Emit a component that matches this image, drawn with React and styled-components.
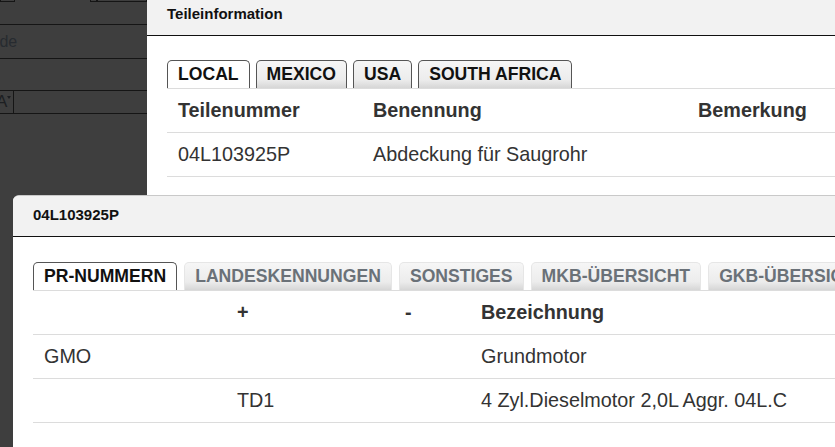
import React from 'react'
import styled, { createGlobalStyle } from 'styled-components';

const GlobalStyle = createGlobalStyle`
  body {
    margin: 0;
    font-family: "Liberation Sans", Arial, sans-serif;
  }
`;

const Screen = styled.div`
  position: relative;
  width: 835px;
  height: 447px;
  overflow: hidden;
  background: #3e3e3e;
`;

/* dimmed page behind the dialogs */
const BackPage = styled.div`
  display: flex;
  flex-direction: column;
  width: 147px;
`;

const BackRow = styled.div`
  display: flex;
  align-items: center;
  height: ${p => p.h}px;
  border-bottom: 1px solid #151515;
  overflow: hidden;
`;

const BackBox = styled.div`
  align-self: flex-start;
  width: ${p => p.w}px;
  margin-left: ${p => p.left || 0}px;
  height: 1px;
  border: 1px solid #151515;
  border-top: none;
`;

const BackText = styled.span`
  margin-left: -29px;
  font-size: 16px;
  color: #272b30;
  white-space: nowrap;
`;

const BackSelect = styled.div`
  position: relative;
  display: flex;
  align-items: center;
  width: 13px;
  height: 100%;
  border-right: 1px solid #151515;
  overflow: hidden;

  span {
    margin-left: -4px;
    font-size: 17px;
    color: #1d1f22;
  }

  &::after {
    content: '';
    position: absolute;
    right: 2px;
    top: 5px;
    border-left: 2px solid transparent;
    border-right: 2px solid transparent;
    border-top: 3px solid #1d1f22;
  }
`;

const Window = styled.div`
  position: absolute;
  left: ${p => p.x}px;
  top: ${p => p.y}px;
  width: ${p => p.w}px;
  height: ${p => p.h}px;
  background: #fff;
  border-top: ${p => (p.framed ? '1px solid #c9c9c9' : 'none')};
  border-radius: ${p => (p.framed ? '6px 0 0 0' : '0')};
  overflow: hidden;
`;

const WindowHeader = styled.div`
  height: ${p => p.h}px;
  box-sizing: border-box;
  padding: ${p => p.pt}px 0 0 20px;
  background: #f2f2f2;
  border-bottom: 1px solid #111;
  font-size: 15px;
  font-weight: bold;
  line-height: 18px;
  color: #111;
`;

const WindowBody = styled.div`
  padding: ${p => p.pt}px 0 0 20px;
`;

const TabBar = styled.div`
  display: flex;
  gap: ${p => p.gap}px;
  height: 28px;
  border-bottom: 1px solid #dcdcdc;
`;

const Tab = styled.div`
  display: flex;
  align-items: center;
  box-sizing: border-box;
  height: 28px;
  padding: 0 10px;
  border: 1px solid ${p => (p.active || p.dark ? '#555' : '#e6e6e6')};
  border-bottom: none;
  border-radius: 5px 5px 0 0;
  background: ${p =>
    p.active ? '#fff' : 'linear-gradient(to bottom, #f6f6f6 0%, #ececec 70%, #d6d6d6 100%)'};
  font-size: 17.6px;
  font-weight: bold;
  color: ${p => (p.active || p.dark ? '#111' : '#6a7178')};
  white-space: nowrap;
`;

const Table = styled.div`
  display: grid;
  grid-template-columns: ${p => p.cols};
  font-size: 19.8px;
  color: #333;
`;

const Cell = styled.div`
  display: flex;
  align-items: center;
  height: 43px;
  padding-left: 11px;
  border-bottom: 1px solid #dcdcdc;
  font-weight: ${p => (p.head ? 'bold' : 'normal')};
  white-space: nowrap;
`;

const partCols = ['Teilenummer', 'Benennung', 'Bemerkung'];
const partRows = [['04L103925P', 'Abdeckung für Saugrohr', '']];

const prCols = ['', '+', '-', 'Bezeichnung'];
const prRows = [
  ['GMO', '', '', 'Grundmotor'],
  ['', 'TD1', '', '4 Zyl.Dieselmotor 2,0L Aggr. 04L.C'],
];

export default function App() {
  return (
    <>
      <GlobalStyle />
      <Screen>
        <BackPage>
          <BackRow h={24}>
            <BackBox w={16} />
            <BackBox w={7} left={75} />
            <BackBox w={60} />
          </BackRow>
          <BackRow h={33}>
            <BackText>Kunde</BackText>
          </BackRow>
          <BackRow h={31} />
          <BackRow h={22}>
            <BackSelect><span>A</span></BackSelect>
          </BackRow>
        </BackPage>

        <Window x={147} y={0} w={700} h={200}>
          <WindowHeader h={36} pt={5}>Teileinformation</WindowHeader>
          <WindowBody pt={24}>
            <TabBar gap={6}>
              <Tab active>LOCAL</Tab>
              <Tab dark>MEXICO</Tab>
              <Tab dark>USA</Tab>
              <Tab dark>SOUTH AFRICA</Tab>
            </TabBar>
            <Table cols="195px 325px 1fr">
              {partCols.map(c => <Cell head key={c}>{c}</Cell>)}
              {partRows.map(r => r.map((v, i) => <Cell key={i}>{v}</Cell>))}
            </Table>
          </WindowBody>
        </Window>

        <Window framed x={13} y={195} w={860} h={280}>
          <WindowHeader h={41} pt={10}>04L103925P</WindowHeader>
          <WindowBody pt={25}>
            <TabBar gap={7}>
              <Tab active>PR-NUMMERN</Tab>
              <Tab>LANDESKENNUNGEN</Tab>
              <Tab>SONSTIGES</Tab>
              <Tab>MKB-ÜBERSICHT</Tab>
              <Tab>GKB-ÜBERSICHT</Tab>
            </TabBar>
            <Table cols="193px 168px 76px 1fr">
              {prCols.map((c, i) => <Cell head key={i}>{c}</Cell>)}
              {prRows.map(r => r.map((v, i) => <Cell key={r[3] + i}>{v}</Cell>))}
            </Table>
          </WindowBody>
        </Window>
      </Screen>
    </>
  )
}
